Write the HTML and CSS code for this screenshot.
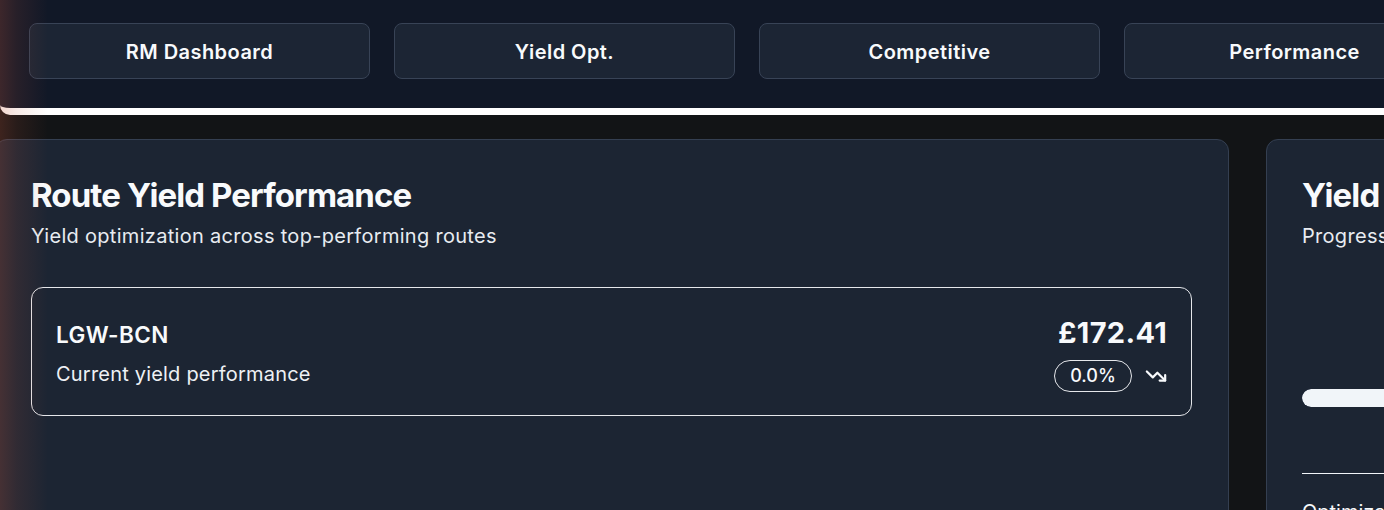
FILE: index.html
```html
<!DOCTYPE html>
<html lang="en">
<head>
<meta charset="utf-8">
<title>RM Dashboard</title>
<link rel="stylesheet" href="styles.css">
</head>
<body>
<div class="page">
  <header class="topbar">
    <nav class="tabs">
      <button class="tab">RM Dashboard</button>
      <button class="tab">Yield Opt.</button>
      <button class="tab">Competitive</button>
      <button class="tab">Performance</button>
    </nav>
  </header>

  <main class="cards">
    <section class="card card-main">
      <h2 class="card-title">Route Yield Performance</h2>
      <p class="card-sub">Yield optimization across top-performing routes</p>

      <div class="route">
        <div class="route-left">
          <div class="route-code">LGW-BCN</div>
          <div class="route-desc">Current yield performance</div>
        </div>
        <div class="route-right">
          <div class="route-value">£172.41</div>
          <div class="route-change">
            <span class="badge">0.0%</span>
            <svg class="trend" viewBox="0 0 24 24" width="22" height="22" fill="none" stroke="currentColor" stroke-width="2.4" stroke-linecap="round" stroke-linejoin="round">
              <polyline points="22 17 13.5 8.5 8.5 13.5 2 7"></polyline>
              <polyline points="16 17 22 17 22 11"></polyline>
            </svg>
          </div>
        </div>
      </div>
    </section>

    <section class="card card-side">
      <h2 class="card-title">Yield Optimization</h2>
      <p class="card-sub">Progress towards yield targets</p>
      <div class="progress-wrap">
        <div class="progress"><div class="progress-fill" style="width: 100%"></div></div>
      </div>
      <div class="divider"></div>
      <div class="side-label">Optimization score</div>
    </section>
  </main>
  <div class="edge-glow"></div>
</div>
</body>
</html>
```

FILE: styles.css
```css
* { box-sizing: border-box; }

html, body {
  margin: 0;
  padding: 0;
  height: 510px;
  overflow: hidden;
  background: #121416;
  font-family: "Inter", "Noto Sans", "Liberation Sans", sans-serif;
  color: #f8fafc;
}

.page {
  position: relative;
  width: 2600px;
}

.topbar {
  background: #111827;
  height: 115px;
  border-bottom: 7px solid #ffffff;
  border-bottom-left-radius: 10px;
  padding: 23px 0 0 29px;
  width: 1384px;
}

.tabs {
  display: flex;
  gap: 24px;
}

.tab {
  flex: 0 0 341px;
  height: 56px;
  padding-top: 2px;
  background: #1c2534;
  border: 1px solid #384356;
  border-radius: 8px;
  color: #f8fafc;
  font-family: inherit;
  font-size: 20px;
  font-weight: 600;
  letter-spacing: 0.45px;
}

.cards {
  display: flex;
  gap: 37px;
  margin-top: 24px;
  margin-left: -5px;
}

.card {
  background: #1c2533;
  border: 1px solid #343f51;
  border-radius: 12px;
  padding: 35px 35px 40px;
  min-height: 420px;
}

.card-main { width: 1234px; padding-right: 36px; }
.card-side { width: 700px; }

.card-title {
  margin: 0;
  font-size: 33px;
  line-height: 40px;
  font-weight: 700;
  letter-spacing: -0.9px;
  color: #f8fafc;
}

.card-sub {
  margin: 7px 0 0;
  font-size: 20px;
  line-height: 28px;
  letter-spacing: 0.3px;
  color: #e8ecf1;
}

.route {
  margin-top: 37px;
  border: 1px solid #e5e7eb;
  border-radius: 12px;
  height: 129px;
  padding: 0 24px;
  display: flex;
  justify-content: space-between;
  align-items: center;
}

.route-left { padding-top: 4px; }

.route-code {
  font-size: 22.5px;
  line-height: 30px;
  font-weight: 600;
  letter-spacing: 0.4px;
}

.route-desc {
  margin-top: 10px;
  font-size: 20px;
  line-height: 28px;
  letter-spacing: 0.2px;
  color: #eef1f5;
}

.route-right {
  display: flex;
  flex-direction: column;
  align-items: flex-end;
  gap: 9px;
  padding-top: 3px;
}

.route-value {
  font-size: 29px;
  line-height: 36px;
  font-weight: 700;
  letter-spacing: 0.3px;
}

.route-change {
  display: flex;
  align-items: center;
  gap: 13px;
}

.badge {
  display: inline-flex;
  align-items: center;
  justify-content: center;
  width: 78px;
  height: 32px;
  border: 1px solid #e5e7eb;
  border-radius: 999px;
  font-size: 18px;
  font-weight: 500;
}

.trend { color: #f8fafc; display: block; }

.progress-wrap {
  margin-top: 139px;
}

.progress {
  height: 18px;
  border-radius: 999px;
  background: #334155;
  overflow: hidden;
}

.progress-fill {
  height: 100%;
  background: #f1f5f9;
  border-radius: 999px;
}

.divider {
  margin-top: 66px;
  height: 1px;
  background: #f1f5f9;
}

.side-label {
  margin-top: 24px;
  font-size: 20px;
  line-height: 28px;
}

.edge-glow {
  position: absolute;
  left: 0;
  top: 0;
  width: 48px;
  height: 510px;
  pointer-events: none;
  background: linear-gradient(90deg, rgba(200, 85, 55, 0.24) 0%, rgba(200, 85, 55, 0.12) 35%, rgba(200, 85, 55, 0) 100%);
}
```
